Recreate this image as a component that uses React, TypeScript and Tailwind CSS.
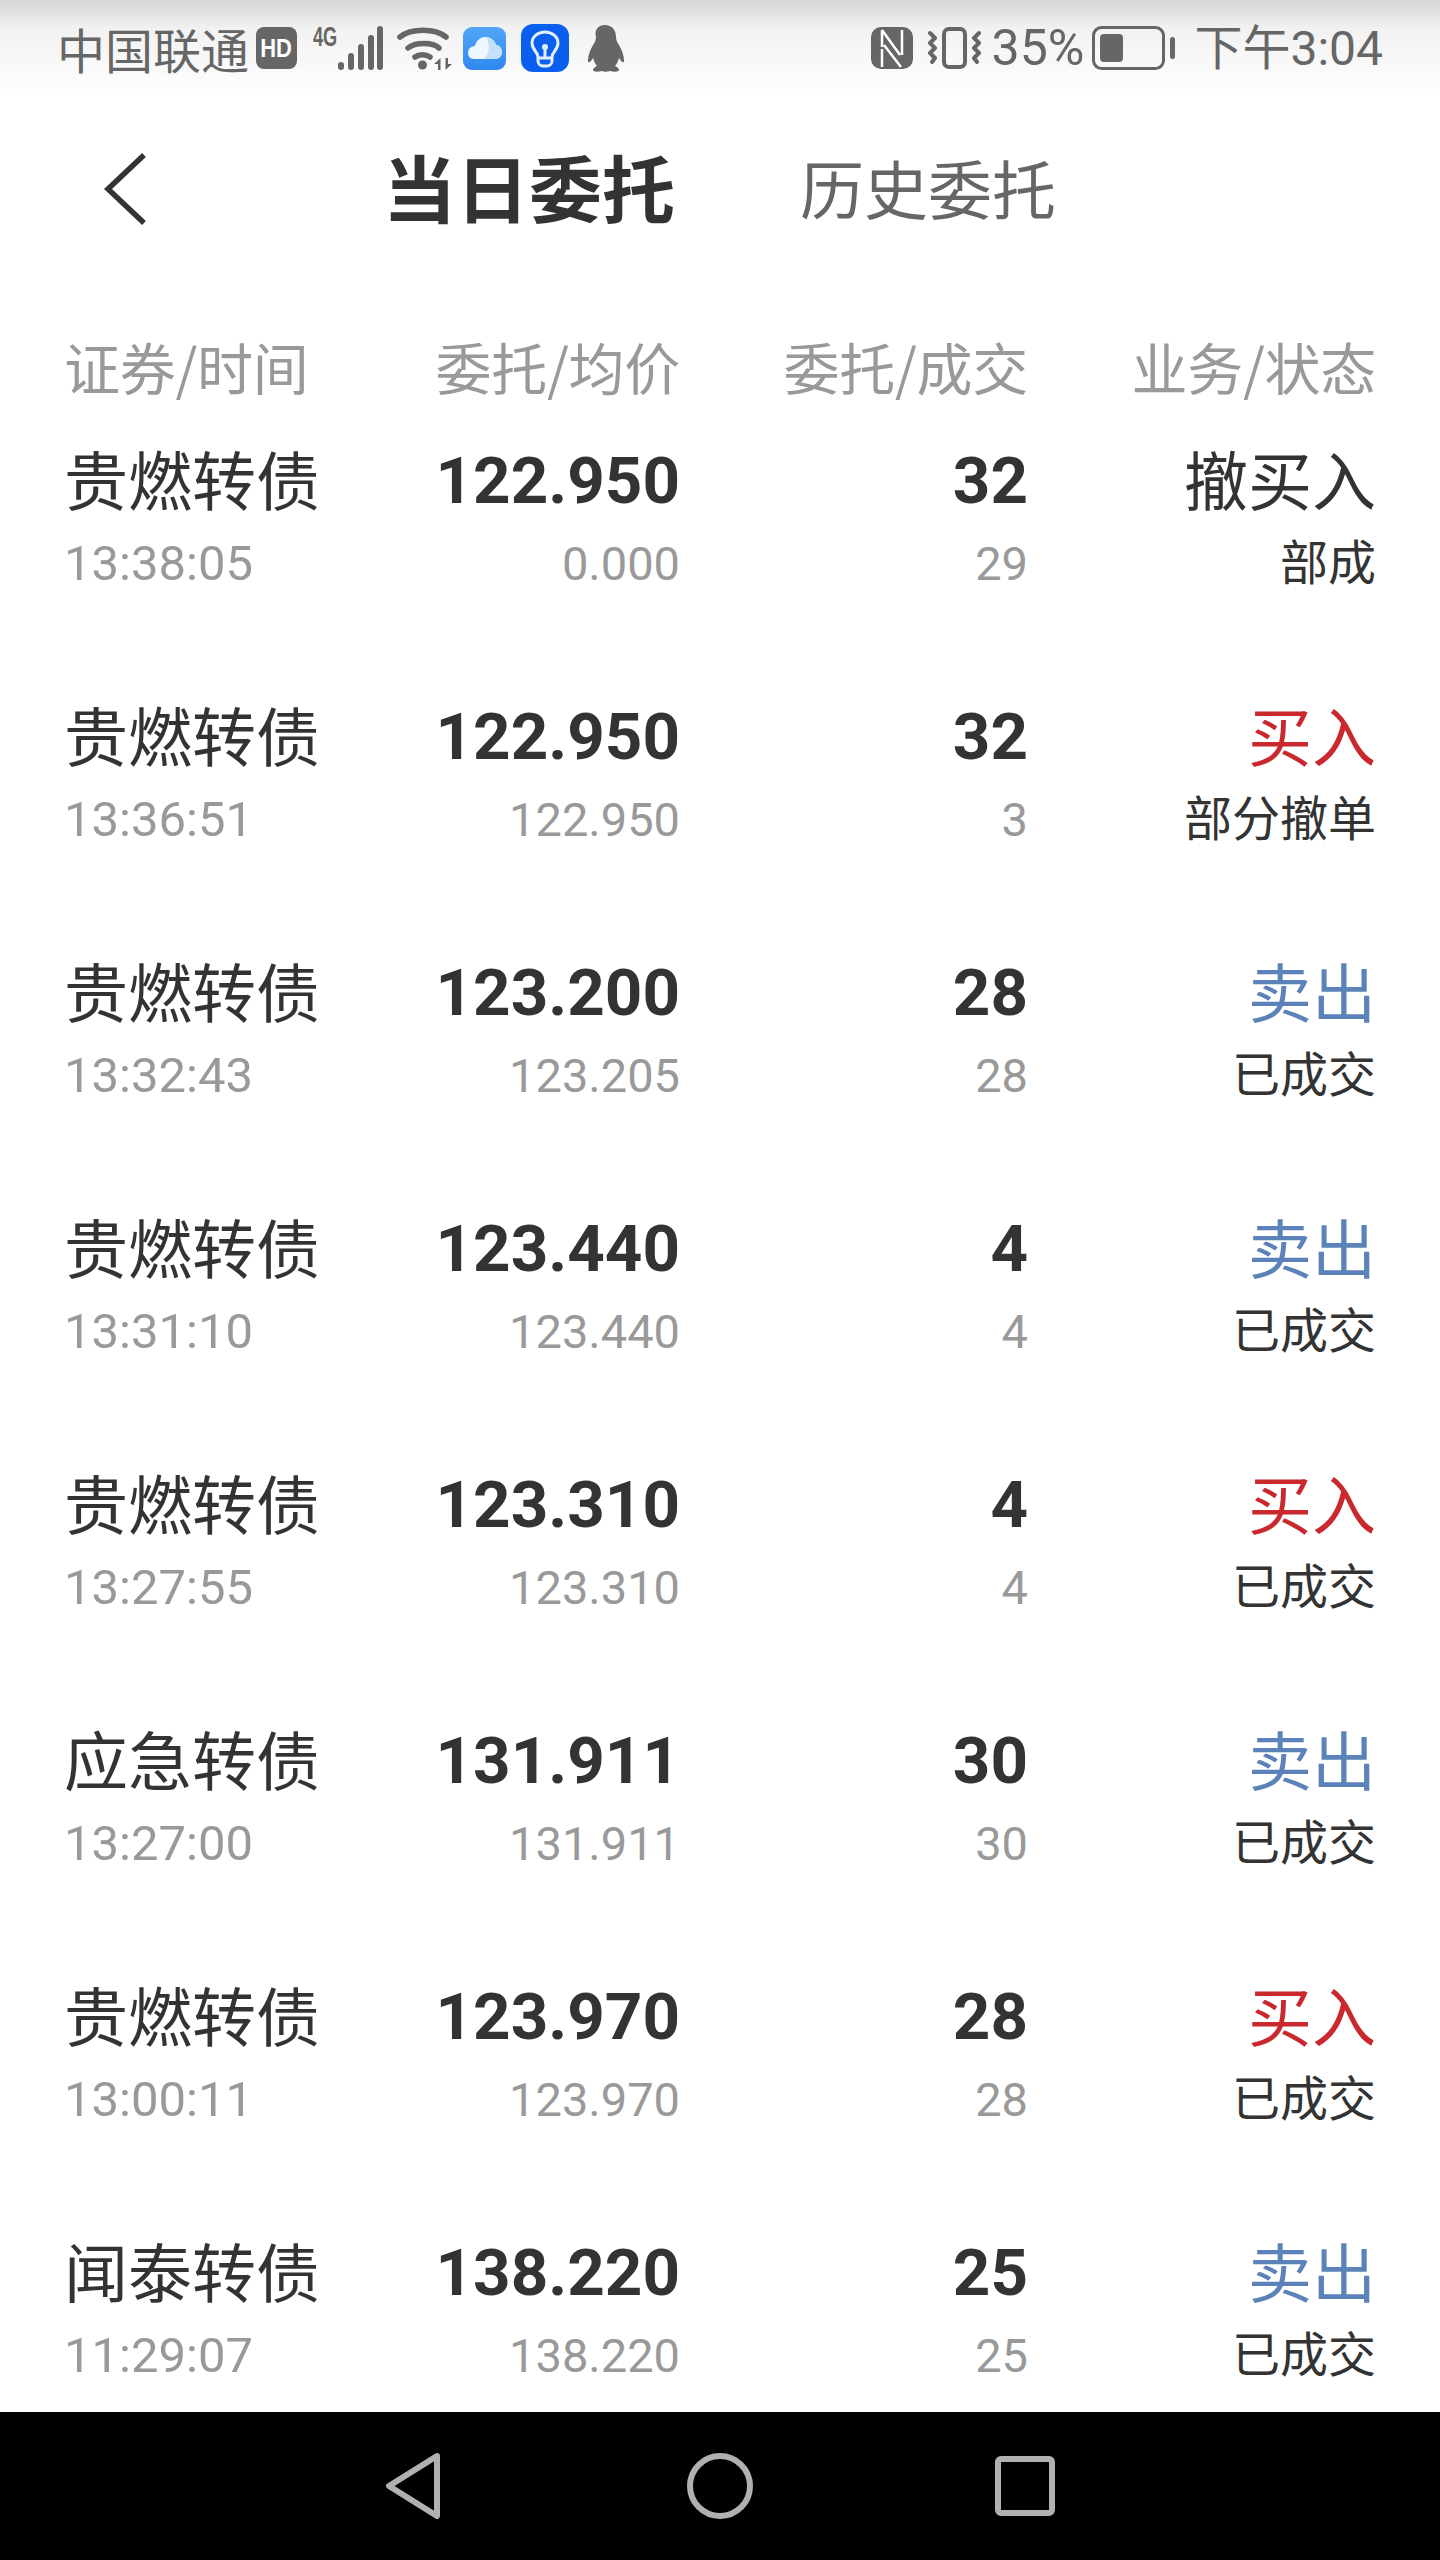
import React from "react";

const cjk = "font-['Noto_Sans_CJK_SC',sans-serif]";
const num = "font-['Roboto','Noto_Sans_CJK_SC',sans-serif]";

type Order = {
  name: string;
  time: string;
  price: string;
  avg: string;
  qty: string;
  done: string;
  side: string;
  status: string;
};

const orders: Order[] = [
  { name: "贵燃转债", time: "13:38:05", price: "122.950", avg: "0.000", qty: "32", done: "29", side: "撤买入", status: "部成" },
  { name: "贵燃转债", time: "13:36:51", price: "122.950", avg: "122.950", qty: "32", done: "3", side: "买入", status: "部分撤单" },
  { name: "贵燃转债", time: "13:32:43", price: "123.200", avg: "123.205", qty: "28", done: "28", side: "卖出", status: "已成交" },
  { name: "贵燃转债", time: "13:31:10", price: "123.440", avg: "123.440", qty: "4", done: "4", side: "卖出", status: "已成交" },
  { name: "贵燃转债", time: "13:27:55", price: "123.310", avg: "123.310", qty: "4", done: "4", side: "买入", status: "已成交" },
  { name: "应急转债", time: "13:27:00", price: "131.911", avg: "131.911", qty: "30", done: "30", side: "卖出", status: "已成交" },
  { name: "贵燃转债", time: "13:00:11", price: "123.970", avg: "123.970", qty: "28", done: "28", side: "买入", status: "已成交" },
  { name: "闻泰转债", time: "11:29:07", price: "138.220", avg: "138.220", qty: "25", done: "25", side: "卖出", status: "已成交" },
];

const sideColor = (side: string) => {
  if (side === "买入") return "text-[#c9282d]";
  if (side === "卖出") return "text-[#5b83b9]";
  return "text-[#333333]";
};

const StatusLeft = () => (
  <div className="flex items-center">
    <span className={`${cjk} text-[48px] leading-[70px] text-[#666666] whitespace-nowrap`}>中国联通</span>
    {/* HD badge */}
    <div className="ml-[7px] w-[41px] h-[42px] rounded-[8px] bg-[#666666] flex items-center justify-center">
      <span className="font-['Liberation_Sans',sans-serif] font-bold text-[25px] leading-none text-white scale-x-[0.88]">HD</span>
    </div>
    {/* 4G + signal */}
    <svg className="ml-[16px]" width="70" height="46" viewBox="0 0 70 46">
      <text x="0" y="21" fontFamily="Liberation Sans" fontWeight="700" fontSize="28" fill="#666" transform="scale(0.65 1)">4G</text>
      <g fill="none" stroke="#666" strokeWidth="6" strokeLinecap="round">
        <path d="M28 40v2" />
        <path d="M38 31v11" />
        <path d="M48 22v20" />
        <path d="M58 13v29" />
        <path d="M67 4v38" />
      </g>
    </svg>
    {/* wifi */}
    <svg className="ml-[14px]" width="55" height="46" viewBox="0 0 55 46">
      <g fill="none" stroke="#666" strokeWidth="5.500" strokeLinecap="round">
        <path d="M3 12C14 3 38 3 49 12" />
        <path d="M11 23C18 17 36 17 42 23" />
        <path d="M18 32C22 29 29 29 33 32" />
      </g>
      <circle cx="25.500" cy="40" r="4.500" fill="#666" />
      <path d="M43.500 33v12H41v-6h-4zM48.500 45V33H51v6h4z" fill="#666" />
    </svg>
    {/* cloud app */}
    <svg className="ml-[11px]" width="43" height="43" viewBox="0 0 43 43">
      <defs>
        <linearGradient id="cloudBg" x1="0" y1="0" x2="0" y2="1">
          <stop offset="0" stopColor="#52a6f8" />
          <stop offset="1" stopColor="#2f88ef" />
        </linearGradient>
      </defs>
      <rect width="43" height="43" rx="9" fill="url(#cloudBg)" />
      <path d="M11 32c-4 0-6-3-6-6 0-4 3-7 7-7 1-5 5-9 10-9 6 0 10 4 11 8 3 0 6 3 6 7 0 4-3 7-7 7z" fill="#eef6fe" />
      <path d="M23 10c5 0 9 4 10 8 3 0 6 3 6 7 0 4-3 7-7 7H21c6-6 6-15 2-22z" fill="#c6e0fb" />
    </svg>
    {/* bulb app */}
    <svg className="ml-[15px]" width="48" height="48" viewBox="0 0 48 48">
      <rect width="48" height="48" rx="12" fill="#0b5fee" />
      <path d="M17 33c0-5-6-7-6-14a13 11 0 0 1 26 0c0 7-6 9-6 14v4a5 5 0 0 1-5 5h-4a5 5 0 0 1-5-5z" fill="none" stroke="#e3eeff" strokeWidth="3" />
      <path d="M17 34h14M24 33v-9" stroke="#e3eeff" strokeWidth="3" />
      <circle cx="24" cy="23" r="3" fill="#e3eeff" />
    </svg>
    {/* qq penguin */}
    <svg className="ml-[16px]" width="40" height="47" viewBox="0 0 40 47">
      <path d="M20 0c7 0 11 5 11 12 0 3 1 5 3 8 3 5 5 11 5 15 0 3-1 3-3 1l-2-3c-1 3-2 6-4 8 2 1 4 2 4 4 0 2-5 2-9 1-3 1-6 1-8 0-4 1-9 1-9-1 0-2 2-3 4-4-2-2-3-5-4-8l-2 3c-2 2-3 2-3-1 0-4 2-10 5-15 2-3 3-5 3-8C9 5 13 0 20 0z" fill="#666" />
    </svg>
  </div>
);

const StatusRight = () => (
  <div className="flex items-center">
    {/* nfc */}
    <svg width="42" height="42" viewBox="0 0 42 42">
      <rect width="42" height="42" rx="10" fill="#666" />
      <path d="M11 3v17M11 3l18 25M13 18l17 22M31 3v25M11 22v18" fill="none" stroke="#fff" strokeWidth="2.500" />
    </svg>
    {/* vibrate */}
    <svg className="ml-[15px]" width="53" height="44" viewBox="0 0 53 44">
      <rect x="16" y="3" width="21" height="38" rx="5" fill="none" stroke="#666" strokeWidth="4" />
      <path d="M2 7l5 5-5 5 5 5-5 5 5 5-3 4M51 7l-5 5 5 5-5 5 5 5-5 5 3 4" fill="none" stroke="#666" strokeWidth="4" strokeLinecap="round" strokeLinejoin="round" />
    </svg>
    <span className={`${num} ml-[11px] text-[50px] leading-[60px] text-[#666666]`}>35%</span>
    {/* battery */}
    <svg className="ml-[8px]" width="84" height="44" viewBox="0 0 84 44">
      <rect x="1.500" y="1.500" width="70" height="41" rx="8" fill="none" stroke="#666" strokeWidth="3" />
      <rect x="8" y="8" width="23" height="28" rx="4" fill="#666" />
      <rect x="78" y="11" width="5" height="22" rx="2.500" fill="#666" />
    </svg>
    <span className={`${num} ml-[18px] text-[48px] leading-[60px] text-[#666666] pt-[2px]`}>下午3:04</span>
  </div>
);

const Row = ({ o }: { o: Order }) => (
  <div className="grid grid-cols-[356px_260px_348px_348px] grid-rows-[83px_83px] pb-[90px] items-center">
    <div className={`${cjk} text-[64px] leading-[70px] pb-[6px] text-[#333333]`}>{o.name}</div>
    <div className={`${num} text-[65.500px] leading-[70px] pt-[2px] font-bold text-[#333333] text-right whitespace-nowrap`}>{o.price}</div>
    <div className={`${num} text-[65.500px] leading-[70px] pt-[2px] font-bold text-[#333333] text-right`}>{o.qty}</div>
    <div className={`${cjk} text-[64px] leading-[70px] pb-[6px] text-right ${sideColor(o.side)}`}>{o.side}</div>
    <div className={`${num} text-[49px] leading-[60px] pt-[2px] text-[#999999]`}>{o.time}</div>
    <div className={`${num} text-[47px] leading-[60px] pt-[2px] text-[#999999] text-right`}>{o.avg}</div>
    <div className={`${num} text-[47px] leading-[60px] pt-[2px] text-[#999999] text-right`}>{o.done}</div>
    <div className={`${cjk} text-[48px] leading-[60px] pb-[8px] text-[#333333] text-right`}>{o.status}</div>
  </div>
);

const App = () => {
  return (
    <div className="w-[1440px] h-[2560px] bg-white flex flex-col overflow-hidden">
      <div className="h-[96px] shrink-0 flex items-center justify-between pl-[57px] pr-[57px] bg-gradient-to-b from-[#d6d6d6] via-[#f2f2f2] via-30% to-white">
        <StatusLeft />
        <StatusRight />
      </div>

      <div className="h-[186px] shrink-0 flex items-center">
        <svg className="ml-[102px]" width="46" height="74" viewBox="0 0 46 74">
          <path d="M42 3L6 37l36 34" fill="none" stroke="#333" strokeWidth="5.500" />
        </svg>
        <span className={`${cjk} ml-[235px] pb-[8px] text-[73px] leading-none font-bold text-[#333333]`}>当日委托</span>
        <span className={`${cjk} ml-[125px] pb-[6px] text-[64px] leading-none text-[#666666]`}>历史委托</span>
      </div>

      <div className="flex-1 min-h-0 overflow-hidden pl-[64px] pr-[64px]">
        <div className="grid grid-cols-[356px_260px_348px_348px] h-[156px] pt-[54px] items-start">
          <div className={`${cjk} text-[56px] leading-[60px] text-[#999999] tracking-[-0.3px]`}>证券/时间</div>
          <div className={`${cjk} text-[56px] leading-[60px] text-[#999999] tracking-[-0.3px] text-right`}>委托/均价</div>
          <div className={`${cjk} text-[56px] leading-[60px] text-[#999999] tracking-[-0.3px] text-right`}>委托/成交</div>
          <div className={`${cjk} text-[56px] leading-[60px] text-[#999999] tracking-[-0.3px] text-right`}>业务/状态</div>
        </div>
        {orders.map((o) => (
          <Row key={o.time} o={o} />
        ))}
      </div>

      <div className="h-[148px] shrink-0 bg-black flex items-center justify-center">
        <svg width="56" height="68" viewBox="0 0 56 68">
          <path d="M52 4L4 34l48 30z" fill="none" stroke="#b0b0b0" strokeWidth="6" strokeLinejoin="round" />
        </svg>
        <svg className="ml-[246px]" width="66" height="66" viewBox="0 0 66 66">
          <circle cx="33" cy="33" r="30" fill="none" stroke="#b0b0b0" strokeWidth="6" />
        </svg>
        <svg className="ml-[242px]" width="60" height="60" viewBox="0 0 60 60">
          <rect x="3" y="3" width="54" height="54" rx="3" fill="none" stroke="#b0b0b0" strokeWidth="6" />
        </svg>
      </div>
    </div>
  );
};

export default App;
